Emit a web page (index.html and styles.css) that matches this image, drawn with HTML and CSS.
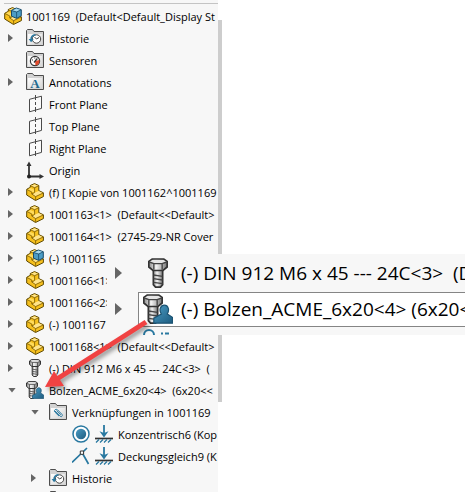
FILE: index.html
```
<!DOCTYPE html>
<html lang="de">
<head>
  <meta charset="UTF-8">
  <title>1001169</title>
  <meta name="viewport" content="width=device-width, initial-scale=1.0">
  <link rel="stylesheet" href="styles.css">
</head>
<body>
  <svg class="defs" aria-hidden="true">
    <defs>
      <linearGradient id="metal" x1="0" x2="1" y1="0" y2="0">
        <stop offset="0" stop-color="#8b8b8b"/>
        <stop offset="0.4" stop-color="#f4f4f4"/>
        <stop offset="1" stop-color="#777"/>
      </linearGradient>
      <linearGradient id="blue" x1="0" x2="1" y1="0" y2="1">
        <stop offset="0" stop-color="#4b9cc4"/>
        <stop offset="1" stop-color="#1d5c80"/>
      </linearGradient>
      <linearGradient id="paper" x1="0" x2="1" y1="0" y2="1">
        <stop offset="0" stop-color="#fff"/>
        <stop offset="1" stop-color="#d5d5d5"/>
      </linearGradient>
    </defs>

    <symbol id="folder" viewBox="0 0 18 18">
      <path d="M.5 16.5V1.5L1.5 .5H6.5L8 2.5H17.5V16.5Z" fill="#d2d2d2" stroke="#4d4d4d"/>
      <path d="M2 5H16V15.5H2Z" fill="url(#paper)"/>
    </symbol>
    <symbol id="history" viewBox="0 0 18 18">
      <use href="#folder"/>
      <circle cx="10.5" cy="10" r="4.2" fill="#fff" stroke="#444"/>
      <path d="M10.5 10L8.5 8M10.5 10L13 8.5" stroke="#444" fill="none"/>
      <path d="M5 11C5 7.5 7 5.8 9.5 5.7" stroke="#2878a0" stroke-width="1.6" fill="none"/>
      <path d="M2.6 10H7.6L5.1 13.3Z" fill="#2878a0"/>
    </symbol>
    <symbol id="sensor" viewBox="0 0 18 18">
      <use href="#folder"/>
      <circle cx="9" cy="10" r="4.6" fill="#fff" stroke="#333" stroke-width="1.2"/>
      <path d="M9 10L13.4 9A4.5 4.5 0 0 1 9.5 14.5Z" fill="#e04a2c"/>
      <path d="M8 11.5L11.3 7.5" stroke="#333" stroke-width="1.3"/>
      <path d="M6 9H7M8.3 7H9.3" stroke="#333"/>
    </symbol>
    <symbol id="notes" viewBox="0 0 18 18">
      <use href="#folder"/>
      <text x="9" y="15" text-anchor="middle" class="letter">A</text>
    </symbol>
    <symbol id="mates" viewBox="0 0 18 18">
      <use href="#folder"/>
      <path d="M6 8L11 13.1C12.6 14.5 14.2 12.7 12.8 11.2L8.6 6.9C7 5.4 4.4 7.2 5.8 9L10 13.1M7.5 7.7L11.8 11.9" stroke="#2878a0" fill="none"/>
    </symbol>
    <symbol id="plane" viewBox="0 0 18 18">
      <path d="M3.5 4.3L15.5 1.2V13.4L3.5 16.8Z" fill="#fafafa" stroke="#4a4a4a"/>
      <path d="M9.5 0V18" stroke="#4a4a4a" stroke-dasharray="5 2 3 2"/>
    </symbol>
    <symbol id="origin" viewBox="0 0 18 18">
      <path d="M3 4V15.5H15" stroke="#333" stroke-width="1.8" fill="none"/>
      <path d="M.5 5L3 .5L5.5 5ZM13.5 13L18 15.5L13.5 18Z" fill="#333"/>
      <circle cx="3" cy="15.5" r="2" fill="#222"/>
    </symbol>
    <symbol id="part" viewBox="0 0 18 18">
      <path d="M.7 6.3L4.3 4.3V2.5L8.5 .6L12.8 2.5V7.6L17.4 9.8V13.6L9.5 17.5L.7 12Z" fill="#f6c01e" stroke="#5e4800" stroke-linejoin="round"/>
      <path d="M4.8 2.8L8.5 1.2L12.2 2.7L8.6 4.5Z" fill="#ffe48a"/>
      <path d="M1.4 6.6L4.5 5L8.4 6.8V9.5L5.5 8.8Z" fill="#ffdb5c"/>
      <path d="M8.8 9.6L12.7 8L16.7 10L9.6 13.4L6.2 11.2Z" fill="#ffe48a"/>
      <path d="M4.4 2.8L8.6 4.7L12.6 2.8M8.6 4.7V9.5L5.8 11L9.6 13.6L17.2 10M9.6 13.6V17M1 6.5L5.8 9V11" fill="none" stroke="#7a5a00" stroke-width=".8"/>
    </symbol>
    <symbol id="assembly" viewBox="0 0 18 18">
      <use href="#part"/>
      <path d="M7.5 3.3L12.3 1L17.3 2.7V8.8L12.7 11.4L7.5 9.2Z" fill="#4c9cc5" stroke="#184b69" stroke-linejoin="round"/>
      <path d="M8.2 3.5L12.4 1.6L16.6 2.9L12.6 4.8Z" fill="#a7d9ee"/>
      <path d="M12.6 5V11M7.8 3.6L12.6 5L17 2.9" stroke="#184b69" stroke-width=".8" fill="none"/>
    </symbol>
    <symbol id="bolt" viewBox="0 0 18 18">
      <path d="M6.2 7H11.8V16L10.5 17.5H7.5L6.2 16Z" fill="url(#metal)" stroke="#333"/>
      <path d="M3.5 2L5.5 .6H12.5L14.5 2V5.4L12 7.5H6L3.5 5.4Z" fill="url(#metal)" stroke="#333"/>
      <path d="M4 2.2L5.8 1.2H12.2L14 2.2L12 3.3H6Z" fill="#e5e5e5"/>
      <path d="M6.5 3.5V7M11.5 3.5V7M3.8 2.4L6.5 3.4H11.5L14.2 2.4M6.3 10.2L11.7 11M6.3 12.4L11.7 13.2M6.3 14.6L11.7 15.4" stroke="#444" stroke-width=".8" fill="none"/>
    </symbol>
    <symbol id="bolt-user" viewBox="0 0 18 18">
      <use href="#bolt" x="-3"/>
      <path d="M11 12C9.5 9.8 10.3 6.7 12.8 6.7S16 9.8 14.6 12L17.7 14V17.5H6.5V14.5Z" fill="url(#blue)" stroke="#1c5372" stroke-width=".7"/>
    </symbol>
    <symbol id="concentric" viewBox="0 0 18 18">
      <circle cx="9" cy="9" r="8" fill="#fff" stroke="#2878a0" stroke-width="1.5"/>
      <circle cx="9" cy="9" r="5.2" fill="url(#blue)"/>
    </symbol>
    <symbol id="coincident" viewBox="0 0 18 18">
      <path d="M0 15.5L15 1M10 5.5L16.5 17" stroke="#2878a0" stroke-width="1.7" fill="none"/>
      <path d="M8.3 4H11.6V7.3H8.3Z" fill="#fff" stroke="#333"/>
    </symbol>
    <symbol id="ground" viewBox="0 0 18 18">
      <path d="M9 0V9" stroke="#2878a0" stroke-width="1.8"/>
      <path d="M4.5 6.2L9 8L13.5 6.2L9 12.6Z" fill="#2878a0"/>
      <path d="M0 13.5H18" stroke="#333" stroke-width="1.7"/>
      <path d="M1 17.5L4 14.5M5 17.5L8 14.5M9 17.5L12 14.5M13 17.5L16 14.5" stroke="#2878a0" stroke-width="1.3"/>
    </symbol>
  </svg>

  <div class="panel">
    <nav class="tree">
      <div class="topbar"></div>
      <div class="row root"><svg class="icon"><use href="#assembly"/></svg><span>1001169  (Default&lt;Default_Display St</span></div>
      <ul>
        <li class="row"><button class="toggle" aria-label="Historie"></button><svg class="icon"><use href="#history"/></svg><span>Historie</span></li>
        <li class="row leaf"><svg class="icon"><use href="#sensor"/></svg><span>Sensoren</span></li>
        <li class="row"><button class="toggle" aria-label="Annotations"></button><svg class="icon"><use href="#notes"/></svg><span>Annotations</span></li>
        <li class="row leaf"><svg class="icon"><use href="#plane"/></svg><span>Front Plane</span></li>
        <li class="row leaf"><svg class="icon"><use href="#plane"/></svg><span>Top Plane</span></li>
        <li class="row leaf"><svg class="icon"><use href="#plane"/></svg><span>Right Plane</span></li>
        <li class="row leaf"><svg class="icon"><use href="#origin"/></svg><span>Origin</span></li>
        <li class="row"><button class="toggle" aria-label="1001162"></button><svg class="icon"><use href="#part"/></svg><span>(f) [ Kopie von 1001162^1001169</span></li>
        <li class="row"><button class="toggle" aria-label="1001163"></button><svg class="icon"><use href="#part"/></svg><span>1001163&lt;1&gt;  (Default&lt;&lt;Default&gt;</span></li>
        <li class="row"><button class="toggle" aria-label="1001164"></button><svg class="icon"><use href="#part"/></svg><span>1001164&lt;1&gt;  (2745-29-NR Cover</span></li>
        <li class="row"><button class="toggle" aria-label="1001165"></button><svg class="icon"><use href="#assembly"/></svg><span>(-) 1001165</span></li>
        <li class="row"><button class="toggle" aria-label="1001166"></button><svg class="icon"><use href="#part"/></svg><span>1001166&lt;1&gt;</span></li>
        <li class="row"><button class="toggle" aria-label="1001166"></button><svg class="icon"><use href="#part"/></svg><span>1001166&lt;2&gt;</span></li>
        <li class="row"><button class="toggle" aria-label="1001167"></button><svg class="icon"><use href="#part"/></svg><span>(-) 1001167</span></li>
        <li class="row"><button class="toggle" aria-label="1001168"></button><svg class="icon"><use href="#part"/></svg><span>1001168&lt;1&gt;  (Default&lt;&lt;Default&gt;</span></li>
        <li class="row"><button class="toggle" aria-label="DIN 912"></button><svg class="icon"><use href="#bolt"/></svg><span>(-) DIN 912 M6 x 45 --- 24C&lt;3&gt;  (</span></li>
        <li class="row"><button class="toggle open" aria-label="Bolzen"></button><svg class="icon"><use href="#bolt-user"/></svg><span>Bolzen_ACME_6x20&lt;4&gt;  (6x20&lt;&lt;</span></li>
        <li>
          <ul class="sub">
            <li class="row"><button class="toggle open" aria-label="Verknüpfungen"></button><svg class="icon"><use href="#mates"/></svg><span>Verknüpfungen in 1001169</span></li>
            <li>
              <ul class="sub">
                <li class="row leaf"><svg class="icon"><use href="#concentric"/></svg><svg class="icon"><use href="#ground"/></svg><span>Konzentrisch6 (Kop</span></li>
                <li class="row leaf"><svg class="icon"><use href="#coincident"/></svg><svg class="icon"><use href="#ground"/></svg><span>Deckungsgleich9 (K</span></li>
              </ul>
            </li>
            <li class="row"><button class="toggle" aria-label="Historie"></button><svg class="icon"><use href="#history"/></svg><span>Historie</span></li>
            <li class="row leaf"><svg class="icon"><use href="#folder"/></svg></li>
          </ul>
        </li>
      </ul>
    </nav>
    <div class="scroll"><div class="thumb"></div></div>
  </div>

  <div class="callout">
    <div class="big"><button class="toggle" aria-label="DIN 912"></button><div class="item"><svg class="icon"><use href="#bolt"/></svg><span>(-) DIN 912 M6 x 45 --- 24C&lt;3&gt;  (D</span></div></div>
    <div class="big"><button class="toggle" aria-label="Bolzen"></button><div class="item selected"><svg class="icon"><use href="#bolt-user"/></svg><span>(-) Bolzen_ACME_6x20&lt;4&gt; (6x20&lt;</span></div></div>
    <svg class="peek" viewBox="0 0 30 8"><path d="M1 8A5 5 0 0 1 11 8M18 6.5H20M22 6.5H26" stroke="#2878a0" stroke-width="2" fill="none"/></svg>
  </div>

  <svg class="pointer" viewBox="0 0 120 86">
    <path d="M103 10L14 67" stroke="#f04242" stroke-width="5"/>
    <path d="M2 75L11 59L21 74Z" fill="#f04242"/>
  </svg>
</body>
</html>
```

FILE: styles.css
```
body {
  margin: 0;
  height: 100vh;
  overflow: hidden;
  position: relative;
  background: #fff;
  color: #000;
  font-family: "Open Sans", "Noto Sans", sans-serif;
  font-size: 11px;
}
ul {
  list-style: none;
  margin: 0;
  padding: 0;
}
.defs {
  position: absolute;
  width: 0;
  height: 0;
}
.letter {
  font: bold 13px "Liberation Serif", serif;
  fill: #22698f;
}
.panel {
  display: flex;
  width: 47.75vw;
  height: 100%;
  overflow: hidden;
}
.tree {
  flex: 1;
  min-width: 0;
  overflow: hidden;
  background: #f7f7f7;
}
.topbar {
  height: 3px;
  margin: 0 0 1px 4px;
  border-bottom: 1px solid #c4c4c4;
}
.scroll {
  width: 4px;
  padding-top: 20px;
  box-sizing: border-box;
}
.thumb {
  height: 81%;
  background: #cdcdcd;
}
.row {
  display: flex;
  align-items: center;
  gap: 5px;
  height: 22px;
  padding-left: 8px;
  white-space: pre;
}
.root {
  gap: 4px;
  padding-left: 4px;
}
.leaf {
  padding-left: 26px;
}
.sub {
  padding-left: 23px;
}
.icon {
  flex: none;
  width: 18px;
  height: 18px;
}
.toggle {
  flex: none;
  width: 13px;
  height: 9px;
  padding: 0;
  border: none;
  background: none;
  cursor: pointer;
}
.toggle::before {
  content: "";
  display: block;
  width: 5px;
  height: 8px;
  background: #666;
  clip-path: polygon(0 0, 100% 50%, 0 100%);
}
.toggle.open::before {
  width: 8px;
  height: 5px;
  clip-path: polygon(0 0, 100% 0, 50% 100%);
}

/* enlarged rows over the tree */
.callout {
  position: absolute;
  top: 254px;
  left: 107px;
  right: 0;
  height: 81px;
  overflow: hidden;
  background: #f7f7f7;
  font-size: 19px;
}
.big {
  display: flex;
  align-items: center;
  height: 36px;
  padding-left: 8px;
  white-space: pre;
}
.big:first-child {
  padding-top: 1px;
}
.big .toggle {
  width: 23px;
  height: 12px;
}
.big .toggle::before {
  width: 7px;
  height: 12px;
}
.big .icon {
  width: 30px;
  height: 30px;
}
.item {
  display: flex;
  flex: 1;
  align-items: center;
  gap: 8px;
  height: 33px;
  min-width: 0;
  padding-left: 4px;
  border: 1px solid transparent;
  border-right: none;
}
.item.selected {
  background: #fff;
  border-color: #858585;
}
.peek {
  display: block;
  width: 30px;
  height: 8px;
  margin-left: 36px;
}
.pointer {
  position: absolute;
  top: 312px;
  left: 43px;
  width: 120px;
  height: 86px;
  filter: drop-shadow(2px 3px 2px rgba(0, 0, 0, 0.4));
}
```
